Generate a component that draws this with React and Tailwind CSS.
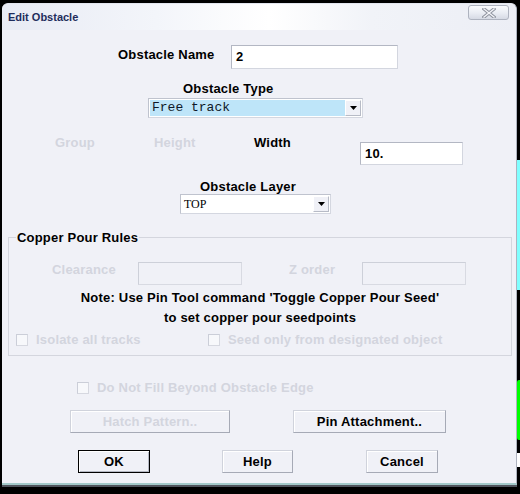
import React from 'react';

const OFF = 'text-[#d3d5de]';

// one line of bold dialog text
const Label = ({ children, disabled, className = '' }) => (
  <span className={`block leading-[15px] whitespace-nowrap ${disabled ? OFF : 'text-black'} ${className}`}>
    {children}
  </span>
);

const TextBox = ({ value, disabled, className = '' }) => (
  <div
    className={`h-[23px] flex items-center pl-[4px] border ${
      disabled
        ? 'border-[#d8dae2] border-t-[#cdd0d9] border-l-[#cdd0d9] bg-[#f0f1f7]'
        : 'border-[#d3d6df] border-t-[#b3b7c3] border-l-[#b3b7c3] bg-white'
    } ${className}`}
  >
    {value}
  </div>
);

const Arrow = () => (
  <svg width="7" height="4" viewBox="0 0 7 4">
    <path d="M0 0h7L3.5 4z" fill="#000" />
  </svg>
);

const Combo = ({ children, className = '', fieldClass = '' }) => (
  <div className={`h-[20px] flex p-[1px] border border-[#d4d7e0] border-t-[#bfc3ce] border-l-[#bfc3ce] bg-white ${className}`}>
    <div className={`flex-1 flex items-center pl-[2px] font-normal ${fieldClass}`}>{children}</div>
    <div className="w-[16px] flex items-center justify-center bg-[#f0f1f7] border border-[#ffffff] border-r-[#b7bbc6] border-b-[#b7bbc6]">
      <Arrow />
    </div>
  </div>
);

const Check = ({ children, className = '' }) => (
  <div className={`flex items-center ${className}`}>
    <span className="w-[12px] h-[12px] border border-[#d6d8e0] border-t-[#cbced8] border-l-[#cbced8] bg-[#f7f8fb]" />
    <Label disabled className="ml-[8px]">{children}</Label>
  </div>
);

const Btn = ({ children, disabled, isDefault, className = '' }) => (
  <button
    type="button"
    className={`h-[23px] flex items-center justify-center font-bold text-[13px] tracking-[0.2px] border ${
      isDefault
        ? 'border-black shadow-[inset_1px_1px_0_#ffffff,inset_-1px_-1px_0_#b4b8c3]'
        : 'border-[#d0d3dc] border-r-[#a6aab6] border-b-[#a6aab6] shadow-[inset_1px_1px_0_#ffffff]'
    } ${disabled ? OFF : 'text-black'} bg-[#f0f1f7] ${className}`}
  >
    {children}
  </button>
);

const CloseGlyph = () => (
  <svg width="14" height="10" viewBox="0 0 14 10">
    <path d="M2 1l10 8M12 1L2 9" stroke="#8e939e" strokeWidth="3.4" strokeLinecap="square" />
    <path d="M2 1l10 8M12 1L2 9" stroke="#f4f5f9" strokeWidth="1.4" strokeLinecap="square" />
  </svg>
);

export default function App() {
  return (
    <div className="relative w-[520px] h-[494px] bg-black overflow-hidden font-['Liberation_Sans',Arial,sans-serif] text-[13px] font-bold tracking-[0.2px]">
      {/* bits of the desktop peeking past the window edge */}
      <div className="absolute right-0 top-[160px] w-[3px] h-[130px] bg-[#80ffff]" />
      <div className="absolute right-0 top-[380px] w-[3px] h-[60px] bg-[#00ff00] rounded-l-[2px]" />
      <div className="absolute right-0 top-[453px] w-[3px] h-[14px] bg-white" />

      <div className="ml-[2px] mt-[3px] w-[515px] h-[482px] flex flex-col bg-[#f0f1f7] rounded-t-[6px] border-r border-r-[#aeb3bf] border-b-2 border-b-[#a3c9c9] border-t border-t-[#e2e5ee] shadow-[0_2px_0_#50545c]">
        {/* title bar */}
        <div className="h-[26px] flex justify-between items-start rounded-t-[6px] bg-[linear-gradient(90deg,#e8ebf4_0%,#f3f5fa_30%,#ffffff_52%,#f1f3f8_72%,#eceef5_100%)]">
          <span className="pl-[6px] pt-[7px] leading-[13px] text-[11px] tracking-normal text-[#1e2d5c]">Edit Obstacle</span>
          <div className="mt-[1px] mr-[7px] w-[41px] h-[15px] flex items-center justify-center rounded-[3px] border border-[#aeb3bf] bg-[linear-gradient(180deg,#fbfcfe_0%,#e9ecf3_55%,#d6dae4_100%)]">
            <CloseGlyph />
          </div>
        </div>

        {/* name */}
        <div className="mt-[15px] flex items-start">
          <Label className="ml-[116px] mt-[2px] w-[113px]">Obstacle Name</Label>
          <TextBox value="2" className="w-[167px] h-[24px]" />
        </div>

        {/* type */}
        <Label className="mt-[12px] ml-[181px]">Obstacle Type</Label>
        <Combo
          className="mt-[2px] ml-[146px] w-[215px]"
          fieldClass="bg-[#bee5f9] text-[#101828] font-['Liberation_Mono','Courier_New',monospace] text-[13px] tracking-normal"
        >
          Free track
        </Combo>

        {/* size */}
        <div className="mt-[17px] flex items-start">
          <Label disabled className="ml-[53px] w-[99px]">Group</Label>
          <Label disabled className="w-[100px]">Height</Label>
          <Label className="w-[106px]">Width</Label>
          <TextBox value="10." className="mt-[7px] w-[103px]" />
        </div>

        {/* layer */}
        <Label className="mt-[14px] ml-[198px]">Obstacle Layer</Label>
        <Combo
          className="ml-[178px] w-[151px]"
          fieldClass="font-['Liberation_Serif','Times_New_Roman',serif] text-[12px] tracking-normal"
        >
          TOP
        </Combo>

        {/* copper pour rules */}
        <fieldset className="mt-[15px] ml-[6px] w-[504px] border border-[#d4d6de] pb-[8px]">
          <legend className="ml-[7px] px-[1px] leading-[17px] text-black">Copper Pour Rules</legend>
          <div className="mt-[16px] flex items-start">
            <Label disabled className="ml-[43px] w-[86px]">Clearance</Label>
            <TextBox disabled className="w-[104px]" />
            <Label disabled className="ml-[47px] w-[73px]">Z order</Label>
            <TextBox disabled className="w-[104px]" />
          </div>
          <p className="mt-[3px] text-center leading-[20px]">
            Note: Use Pin Tool command 'Toggle Copper Pour Seed'
            <br />
            to set copper pour seedpoints
          </p>
          <div className="mt-[4px] flex">
            <Check className="ml-[7px] w-[192px]">Isolate all tracks</Check>
            <Check>Seed only from designated object</Check>
          </div>
        </fieldset>

        <Check className="mt-[24px] ml-[75px]">Do Not Fill Beyond Obstacle Edge</Check>

        <div className="mt-[15px] flex">
          <Btn disabled className="ml-[68px] w-[160px]">Hatch Pattern..</Btn>
          <Btn className="ml-[63px] w-[153px]">Pin Attachment..</Btn>
        </div>

        <div className="mt-[17px] flex">
          <Btn isDefault className="ml-[76px] w-[72px]">OK</Btn>
          <Btn className="ml-[72px] w-[71px]">Help</Btn>
          <Btn className="ml-[73px] w-[72px]">Cancel</Btn>
        </div>
      </div>
    </div>
  );
}
